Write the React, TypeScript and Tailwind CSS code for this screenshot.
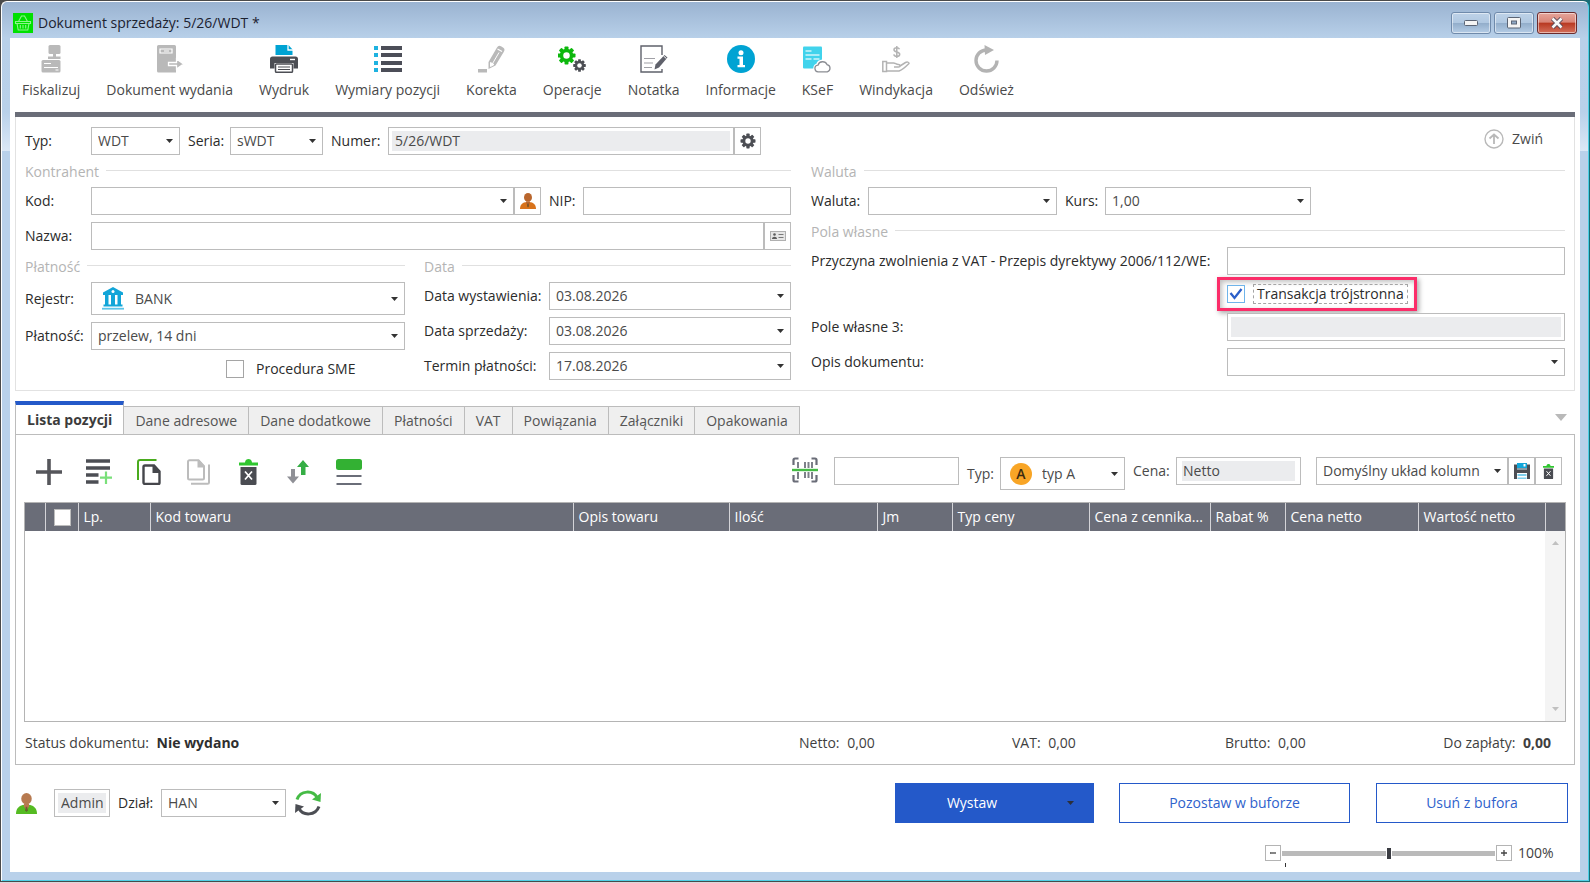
import React, { useState } from "react";
import clsx from "clsx";

/* ---------- icons ---------- */

function Gear({ cx, cy, r, color, hole = "#fff" }: { cx: number; cy: number; r: number; color: string; hole?: string }) {
  const tooth = r * 0.44;
  return (
    <g fill={color}>
      {[0, 45, 90, 135].map((a) => (
        <rect
          key={a}
          x={cx - tooth / 2}
          y={cy - r}
          width={tooth}
          height={r * 2}
          rx={tooth * 0.2}
          transform={`rotate(${a} ${cx} ${cy})`}
        />
      ))}
      <circle cx={cx} cy={cy} r={r * 0.75} />
      <circle cx={cx} cy={cy} r={r * 0.36} fill={hole} />
    </g>
  );
}

const BasketIcon = () => (
  <svg width="20" height="20" viewBox="0 0 20 20" className="shrink-0">
    <rect width="20" height="20" fill="#00e000" />
    <g fill="none" stroke="#8cf58c" strokeWidth="1.1">
      <path d="M5.5 8.5 8.5 3h3l3 5.5" />
      <path d="M2.5 8.5h15v2h-15z" />
      <path d="M4 10.5 5.2 17h9.6l1.2-6.5" />
      <path d="M7.3 12v3.5M10 12v3.5M12.7 12v3.5" />
    </g>
  </svg>
);

const FiscalIcon = () => (
  <svg width="28" height="28" viewBox="0 0 28 28">
    <g fill="#b9b9b9">
      <rect x="11.5" y="0" width="12" height="9" rx="1.5" />
      <rect x="16" y="8" width="3" height="6" />
      <rect x="11" y="11.5" width="12.5" height="2.5" />
      <rect x="4.5" y="15" width="19" height="12.5" rx="1.5" />
    </g>
    <path d="M7 18.5h7M7 22.5h14" stroke="#fff" strokeWidth="1.2" />
    <path d="M18.5 25h3" stroke="#fff" strokeWidth="1" />
  </svg>
);

const ReleaseIcon = () => (
  <svg width="28" height="28" viewBox="0 0 28 28">
    <path d="M2.5 0h16A1.5 1.5 0 0 1 20 1.500V27.500H2.500A1.500 1.500 0 0 1 1 26V1.500A1.500 1.500 0 0 1 2.500 0z" fill="#b9b9b9" />
    <path d="M4 4h12v4H4z" fill="none" stroke="#fff" strokeWidth="1.2" />
    <path d="M8 6h5" stroke="#fff" strokeWidth="1" />
    <path d="M12.5 17.500h8v-3.500l7 5-7 5v-3.500h-8z" fill="#b9b9b9" stroke="#fff" strokeWidth="1.3" />
  </svg>
);

const PrinterIcon = () => (
  <svg width="28" height="28" viewBox="0 0 28 28">
    <path d="M5.5 0h13l4 4.5V10h-17z" fill="#00a3d3" />
    <path d="M18 0v5h5" fill="none" stroke="#fff" strokeWidth="1.3" />
    <path d="M2.5 11.5h23A2.5 2.5 0 0 1 28 14v9.500h-4.500V18h-19v5.500H0V14a2.500 2.500 0 0 1 2.500-2.500z" fill="#4c4e54" />
    <path d="M20 14.500h5" stroke="#fff" strokeWidth="1.4" />
    <rect x="5.500" y="19" width="17" height="8.300" rx="1" fill="#fff" stroke="#4c4e54" strokeWidth="1.5" />
    <path d="M8 22h12M8 24.500h12" stroke="#4c4e54" strokeWidth="1.2" />
  </svg>
);

const DimensionsIcon = () => (
  <svg width="28" height="28" viewBox="0 0 28 28">
    {[3, 10, 18, 25].map((y) => (
      <g key={y}>
        <rect x="0" y={y - 2} width="4" height="4" fill="#1eb2e0" />
        <rect x="7" y={y - 2} width="21" height="4" fill="#4c4e58" />
      </g>
    ))}
  </svg>
);

const CorrectionIcon = () => (
  <svg width="28" height="28" viewBox="0 0 28 28">
    <path d="M11.5 17 20 2.5a3 3 0 0 1 4-1.2l2 1.200a3 3 0 0 1 1 4L18.500 20.500l-7 3.500z" fill="#b9b9b9" />
    <path d="m20.5 4 4.5 2.5" stroke="#fff" strokeWidth="1.3" />
    <path d="m22 7.5-7 12M13.5 17.5l3.5 2-3.500 2z" stroke="#fff" strokeWidth="1" fill="#fff" />
    <rect x="1" y="24" width="9" height="3.5" fill="#b9b9b9" />
  </svg>
);

const OperationsIcon = () => (
  <svg width="28" height="28" viewBox="0 0 28 28">
    <Gear cx={8.5} cy={10.5} r={9} color="#0db80d" />
    <Gear cx={21.5} cy={20.5} r={6.3} color="#4c4e54" />
  </svg>
);

const NoteIcon = () => (
  <svg width="28" height="28" viewBox="0 0 28 28">
    <path d="M22 10V1H1v26h21v-3" fill="none" stroke="#5f616b" strokeWidth="1.4" />
    <path d="M4 13.5h11M4 18h9M4 22.5h8" stroke="#a0a0a6" strokeWidth="1.2" />
    <path d="m15.5 19.5 9-9.5 3 2.5-8.500 10-4.500 2z" fill="#5f616b" />
    <path d="m23.5 11 3 2.7" stroke="#fff" strokeWidth="1" />
  </svg>
);

const InfoIcon = () => (
  <svg width="28" height="28" viewBox="0 0 28 28">
    <circle cx="14" cy="14" r="14" fill="#00a3d3" />
    <circle cx="14" cy="7.8" r="2.5" fill="#fff" />
    <path d="M10.5 11.500H16V20h2v2.300h-7.500V20h2v-6.200h-2z" fill="#fff" />
  </svg>
);

const KsefIcon = () => (
  <svg width="28" height="28" viewBox="0 0 28 28">
    <rect x="0" y="1.5" width="19" height="22" rx="1" fill="#41d3ec" />
    <path d="M2.5 6h6M2.5 10h14M2.5 14h6M10.5 14h6" stroke="#fff" strokeOpacity=".75" strokeWidth="1.3" />
    <path
      d="M15.5 27a3.500 3.500 0 0 1-.5-6.900 5 5 0 0 1 9.300-.6A3.900 3.900 0 0 1 24.500 27z"
      fill="#fff"
      stroke="#fff"
      strokeWidth="4"
    />
    <path
      d="M15.5 26.800a3.300 3.300 0 0 1-.5-6.600 4.800 4.800 0 0 1 9-.6 3.700 3.700 0 0 1 .3 7.200z"
      fill="#fff"
      stroke="#8b8d93"
      strokeWidth="1.3"
    />
  </svg>
);

const CollectionIcon = () => (
  <svg width="28" height="28" viewBox="0 0 28 28" fill="none" stroke="#b3b3b3" strokeWidth="1.5">
    <path d="M17.5 4.200C17 3 16 2.700 14.700 2.700c-1.700 0-2.700.8-2.700 2 0 2.900 5.700 1.500 5.700 4.600 0 1.300-1.200 2.100-2.900 2.100-1.600 0-2.700-.7-3-2M14.800 1v12" />
    <path d="M.8 16.500h3.700v10H.8zM4.500 18h7c2 0 2.500 1.500 5 1.500 2 0 2 2.500 0 2.500H12" />
    <path d="M4.500 26H17c3.500-1 7-4.500 10-7.500 0-1.500-2-1.800-3.500-1L18 21" />
  </svg>
);

const ReloadIcon = () => (
  <svg width="28" height="28" viewBox="0 0 28 28">
    <path d="M14.500 5A10.500 10.500 0 1 0 25 15.500" fill="none" stroke="#b3b3b3" strokeWidth="3.4" />
    <path d="M12.500 0 22 5l-9 5z" fill="#b3b3b3" />
  </svg>
);

const UserIcon = ({ size, body, head }: { size: number; body: string; head: string }) => (
  <svg width={size} height={size} viewBox="0 0 20 20" className="shrink-0">
    <path d="M0 20c0-5 2.500-7.500 6.500-8.500h7C17.500 12.500 20 15 20 20z" fill={body} />
    <path d="M7.500 10.500h5v2L10 17l-2.500-4.500z" fill={head} />
    <ellipse cx="10" cy="5.500" rx="5" ry="5.500" fill={head} />
    <path d="M9.300 13h1.400l.6 3.500L10 18l-1.300-1.500z" fill="#5d4a2a" fillOpacity=".7" />
  </svg>
);

const CardIcon = () => (
  <svg width="16" height="10" viewBox="0 0 16 10">
    <rect x=".5" y=".5" width="15" height="9" fill="#e6e6e6" stroke="#b0b0b0" />
    <circle cx="4.5" cy="3.5" r="1.3" fill="#5c5c5c" />
    <path d="M2 8c0-3 5-3 5 0z" fill="#5c5c5c" />
    <path d="M8.500 3.500h5M8.500 6.500h5" stroke="#7a7a7a" />
  </svg>
);

const BankIcon = () => (
  <svg width="22" height="23" viewBox="0 0 22 23" className="shrink-0" fill="#12a5d8">
    <path d="M11 0 21 5.500V8H1V5.500z" />
    <circle cx="11" cy="4.5" r="1.5" fill="#fff" />
    <path d="M3 8h3.500v10H3zM9 8h4v10H9zM15.500 8H19v10h-3.500z" />
    <rect x="1.5" y="17.500" width="19" height="2" />
    <rect x="0" y="20.800" width="22" height="1.800" fill="#5cc4e8" />
  </svg>
);

const TrashIcon = ({ w, h }: { w: number; h: number }) => (
  <svg width={w} height={h} viewBox="0 0 19 26">
    <path d="M0 3.500h6C6 1 8 0 9.500 0S13 1 13 3.500h6v3H0z" fill="#2fc62f" />
    <path d="M1.500 8h16v16.500A1.500 1.500 0 0 1 16 26H3a1.500 1.500 0 0 1-1.500-1.500z" fill="#4a4c52" />
    <path d="m6 12.500 7 8M13 12.500l-7 8" stroke="#fff" strokeWidth="1.7" />
  </svg>
);

const DiskIcon = () => (
  <svg width="16" height="16" viewBox="0 0 16 16">
    <path d="M0 1.500h16V16H0z" fill="#4c4e54" />
    <path d="M3 0h10v5H3z" fill="#12a5d8" />
    <path d="M9.500 1h2v2.500h-2z" fill="#fff" />
    <path d="M3 10h10v6H3z" fill="#fff" />
    <path d="M3 5.500h10v1H3z" fill="#c9e9f5" />
    <path d="M3.500 11h9v2h-9zM3.500 14.500h9V16h-9z" fill="#7fd0ee" />
  </svg>
);

const PlusIcon = () => (
  <svg width="26" height="26" viewBox="0 0 26 26">
    <path d="M13 0v26M0 13h26" stroke="#55565b" strokeWidth="3.6" />
  </svg>
);

const AddLineIcon = () => (
  <svg width="26" height="26" viewBox="0 0 26 26">
    <path d="M0 2h24M0 9h24M0 16h12.500M0 23h12.500" stroke="#4c4e54" strokeWidth="3.3" />
    <path d="M20 12.500V25M14 18.700h12" stroke="#7ae07a" strokeWidth="2.2" />
  </svg>
);

const CopyIcon = () => (
  <svg width="24" height="26" viewBox="0 0 24 26" fill="none">
    <path d="M1 21V3q0-2 2-2h16.500" stroke="#4aab1e" strokeWidth="2" />
    <path d="M8 6.500h9l5.500 6V24a1 1 0 0 1-1 1H8a1.500 1.500 0 0 1-1.500-1.500V8A1.500 1.500 0 0 1 8 6.500z" stroke="#45464b" strokeWidth="2.4" />
    <path d="M15.500 6h1.800l5.700 6.200V14h-7.500z" fill="#45464b" />
  </svg>
);

const PasteIcon = () => (
  <svg width="24" height="26" viewBox="0 0 24 26" fill="none" stroke="#bcbcbc">
    <path d="M2.500 1.200h9l5.500 6V19a1.500 1.500 0 0 1-1.500 1.500H2.500A1.500 1.500 0 0 1 1 19V2.700a1.500 1.500 0 0 1 1.500-1.500z" strokeWidth="2" />
    <path d="M10.500 1h1.800L17.500 7v1.500h-7z" fill="#bcbcbc" stroke="none" />
    <path d="M22 5.500v18q0 1.300-1.300 1.300H4" strokeWidth="2" />
  </svg>
);

const SortIcon = () => (
  <svg width="22" height="24" viewBox="0 0 22 24">
    <path d="M4 9h4v7.500h4L6 23.500 0 16.500h4z" fill="#8f9096" />
    <path d="M14 15h4.500V7H22l-6-7-6 7h4z" fill="#35ae45" />
  </svg>
);

const LayoutIcon = () => (
  <svg width="26" height="26" viewBox="0 0 26 26">
    <rect x="0" y="0" width="26" height="11" rx="2.5" fill="#33b133" />
    <path d="M.5 17h25M.5 25h25" stroke="#6a6d78" strokeWidth="1.8" />
  </svg>
);

const ScanIcon = () => (
  <svg width="26" height="26" viewBox="0 0 26 26" fill="none">
    <g stroke="#6a6d78" strokeWidth="2.2">
      <path d="M1.500 8V3q0-1.500 1.500-1.500h3.500M19.500 1.500H23q1.500 0 1.500 1.500v5M1.500 18v5q0 1.500 1.500 1.500h3.500M19.500 24.500H23q1.500 0 1.500-1.500v-5" />
    </g>
    <path d="M6 5v6M13 5v6M16.500 5v6M20 5v6M6 15v7M13 15v6M16.500 15v6M20 15v7" stroke="#7d8089" strokeWidth="2" />
    <path d="M0 13h26" stroke="#45bb45" strokeWidth="2.4" />
  </svg>
);

const SyncIcon = () => (
  <svg width="26" height="26" viewBox="0 0 26 26" fill="none">
    <path d="M2 9.500C5.500 0 18 0 22 7.500" stroke="#45bb45" strokeWidth="3" />
    <path d="m26 3-.5 9L17 9.500z" fill="#45bb45" />
    <path d="M24 16.500C20.500 26 8 26 4 18.500" stroke="#4c4e54" strokeWidth="3" />
    <path d="m0 23 .5-9L9 16.500z" fill="#4c4e54" />
  </svg>
);

const Caret = ({ className }: { className?: string }) => (
  <svg width="7" height="4" viewBox="0 0 7 4" className={clsx("pointer-events-none shrink-0", className)}>
    <path d="M0 0h7L3.500 4z" fill="currentColor" />
  </svg>
);

/* ---------- form controls ---------- */

type ComboProps = {
  id: string;
  value?: string;
  className?: string;
  height?: string;
  icon?: React.ReactNode;
};

function Combo({ id, value = "", className, height = "h-7", icon }: ComboProps) {
  return (
    <div className={clsx("flex min-w-0 items-center border border-[#bcbcbc] bg-white", height, className)}>
      {icon}
      <select
        id={id}
        defaultValue={value}
        className="-mr-4 h-full min-w-0 flex-1 appearance-none bg-transparent pr-4 pl-[6px] text-[#4a4a4a] outline-none"
      >
        <option value={value}>{value}</option>
      </select>
      <Caret className="mr-[6px] text-[#333]" />
    </div>
  );
}

function TextBox({ id, className }: { id: string; className?: string }) {
  return <input id={id} type="text" className={clsx("h-7 min-w-0 border border-[#bcbcbc] bg-white px-[6px] outline-none", className)} />;
}

function ReadOnlyBox({ id, value, className, pad = "px-[3px]" }: { id: string; value?: string; className?: string; pad?: string }) {
  return (
    <div className={clsx("flex h-7 min-w-0 border border-[#bcbcbc] bg-white p-[3px]", className)}>
      <input id={id} type="text" readOnly defaultValue={value} className={clsx("min-w-0 flex-1 bg-[#ebecee] text-[#4a4a4a] outline-none", pad)} />
    </div>
  );
}

function SideButton({ label, children }: { label: string; children: React.ReactNode }) {
  return (
    <button aria-label={label} className="flex h-7 w-[27px] shrink-0 items-center justify-center border border-[#bcbcbc] bg-white">
      {children}
    </button>
  );
}

function Section({ title }: { title: string }) {
  return (
    <div className="mb-[5px] flex h-5 items-center gap-[7px] text-[#b4b4b4]">
      <h2>{title}</h2>
      <div className="mb-1 h-px flex-1 bg-[#e0e0e0]" />
    </div>
  );
}

function Check({ id, checked = false }: { id: string; checked?: boolean }) {
  const [on, setOn] = useState(checked);
  return (
    <span className="grid size-[18px] shrink-0">
      <input
        id={id}
        type="checkbox"
        checked={on}
        onChange={(e) => setOn(e.target.checked)}
        className="size-[18px] appearance-none border border-[#a5a5a5] bg-white [grid-area:1/1] checked:border-[#6fb4ea]"
      />
      {on && (
        <svg width="18" height="18" viewBox="0 0 18 18" className="pointer-events-none [grid-area:1/1]">
          <path d="m3.500 8 4 5L14.500 4" fill="none" stroke="#2b5fc9" strokeWidth="2.3" />
        </svg>
      )}
    </span>
  );
}

/* ---------- sections ---------- */

const actions = [
  { label: "Fiskalizuj", icon: <FiscalIcon /> },
  { label: "Dokument wydania", icon: <ReleaseIcon /> },
  { label: "Wydruk", icon: <PrinterIcon /> },
  { label: "Wymiary pozycji", icon: <DimensionsIcon /> },
  { label: "Korekta", icon: <CorrectionIcon /> },
  { label: "Operacje", icon: <OperationsIcon /> },
  { label: "Notatka", icon: <NoteIcon /> },
  { label: "Informacje", icon: <InfoIcon /> },
  { label: "KSeF", icon: <KsefIcon /> },
  { label: "Windykacja", icon: <CollectionIcon /> },
  { label: "Odśwież", icon: <ReloadIcon /> },
];

const tabs = ["Lista pozycji", "Dane adresowe", "Dane dodatkowe", "Płatności", "VAT", "Powiązania", "Załączniki", "Opakowania"];

const columns = [
  { name: "", width: "w-[20px]" },
  { name: "check", width: "w-[33px]" },
  { name: "Lp.", width: "w-[72px]" },
  { name: "Kod towaru", width: "" },
  { name: "Opis towaru", width: "w-[156px]" },
  { name: "Ilość", width: "w-[148px]" },
  { name: "Jm", width: "w-[75px]" },
  { name: "Typ ceny", width: "w-[137px]" },
  { name: "Cena z cennika...", width: "w-[121px]" },
  { name: "Rabat %", width: "w-[75px]" },
  { name: "Cena netto", width: "w-[133px]" },
  { name: "Wartość netto", width: "w-[127px]" },
  { name: "", width: "w-[20px]" },
];

function TitleBar() {
  const button = "flex h-[22px] items-center justify-center rounded-[3px] border shadow-[inset_0_0_0_1px_rgba(255,255,255,0.5)]";
  const glass = "w-10 border-[#6f8aab] bg-[linear-gradient(to_bottom,#bed2e8_0%,#b0c8e1_48%,#93aecb_52%,#b5cde6_100%)]";
  return (
    <header className="flex h-9 items-center gap-[5px] pt-[6px] pr-[3px] pl-[3px]">
      <BasketIcon />
      <h1 className="flex-1 text-[#1c2230]">Dokument sprzedaży: 5/26/WDT *</h1>
      <div className="flex gap-[3px]">
        <button aria-label="Minimalizuj" className={clsx(button, glass)}>
          <svg width="14" height="7" viewBox="0 0 14 7">
            <rect x=".5" y=".5" width="13" height="5" rx="1" fill="#f4f4f4" stroke="#5b6474" />
          </svg>
        </button>
        <button aria-label="Maksymalizuj" className={clsx(button, glass)}>
          <svg width="14" height="12" viewBox="0 0 14 12">
            <rect x=".5" y=".5" width="13" height="10.5" rx="1" fill="#f4f4f4" stroke="#5b6474" />
            <rect x="4.5" y="4" width="5" height="3" fill="#8fa9c6" stroke="#5b6474" />
          </svg>
        </button>
        <button
          aria-label="Zamknij"
          className={clsx(button, "w-10 border-[#6b2a2c] bg-[linear-gradient(to_bottom,#e6a59b_0%,#d98578_45%,#b93a23_52%,#d4705c_100%)]")}
        >
          <svg width="14" height="12" viewBox="0 0 14 12">
            <path d="m2.500 1.500 9 9M11.500 1.500l-9 9" stroke="#5b4a58" strokeWidth="4.5" />
            <path d="m2.500 1.500 9 9M11.500 1.500l-9 9" stroke="#f7f7f7" strokeWidth="2.6" />
          </svg>
        </button>
      </div>
    </header>
  );
}

function DocumentForm() {
  return (
    <section className="grid grid-cols-[766fr_754fr] gap-x-5 border-x border-b border-[#e2e2e2] px-[9px] pt-[10px] pb-[10px]">
      <div className="min-w-0">
        <div className="mb-[7px] flex items-center pr-[30px]">
          <label htmlFor="typ" className="w-[66px] shrink-0">Typ:</label>
          <Combo id="typ" value="WDT" className="w-[89px]" />
          <label htmlFor="seria" className="ml-2 w-[42px] shrink-0">Seria:</label>
          <Combo id="seria" value="sWDT" className="w-[93px]" />
          <label htmlFor="numer" className="ml-2 w-[57px] shrink-0">Numer:</label>
          <ReadOnlyBox id="numer" value="5/26/WDT" className="flex-1" />
          <SideButton label="Ustawienia numeru">
            <svg width="16" height="16" viewBox="0 0 16 16">
              <Gear cx={8} cy={8} r={7.5} color="#4c4e54" />
            </svg>
          </SideButton>
        </div>

        <Section title="Kontrahent" />
        <div className="mb-[7px] flex items-center">
          <label htmlFor="kod" className="w-[66px] shrink-0">Kod:</label>
          <Combo id="kod" className="flex-1" />
          <SideButton label="Kontrahent">
            <UserIcon size={16} body="#d8731c" head="#b9662d" />
          </SideButton>
          <label htmlFor="nip" className="ml-2 w-[34px] shrink-0">NIP:</label>
          <TextBox id="nip" className="w-[208px]" />
        </div>
        <div className="mb-[7px] flex items-center">
          <label htmlFor="nazwa" className="w-[66px] shrink-0">Nazwa:</label>
          <TextBox id="nazwa" className="flex-1" />
          <SideButton label="Karta kontrahenta">
            <CardIcon />
          </SideButton>
        </div>

        <div className="grid grid-cols-[380fr_367fr] gap-x-[19px]">
          <div className="min-w-0">
            <Section title="Płatność" />
            <div className="mb-[7px] flex items-center">
              <label htmlFor="rejestr" className="w-[66px] shrink-0">Rejestr:</label>
              <Combo id="rejestr" value="BANK" height="h-[33px]" className="flex-1 pl-[10px]" icon={<span className="pr-[5px]"><BankIcon /></span>} />
            </div>
            <div className="mb-[9px] flex items-center">
              <label htmlFor="platnosc" className="w-[66px] shrink-0">Płatność:</label>
              <Combo id="platnosc" value="przelew, 14 dni" className="flex-1" />
            </div>
            <div className="flex items-center gap-3 pl-[201px]">
              <Check id="sme" />
              <label htmlFor="sme">Procedura SME</label>
            </div>
          </div>
          <div className="min-w-0">
            <Section title="Data" />
            {[
              { id: "wystawienie", label: "Data wystawienia:", value: "03.08.2026" },
              { id: "sprzedaz", label: "Data sprzedaży:", value: "03.08.2026" },
              { id: "termin", label: "Termin płatności:", value: "17.08.2026" },
            ].map((d) => (
              <div key={d.id} className="mb-[7px] flex items-center last:mb-0">
                <label htmlFor={d.id} className="w-[125px] shrink-0">{d.label}</label>
                <Combo id={d.id} value={d.value} className="flex-1" />
              </div>
            ))}
          </div>
        </div>
      </div>

      <div className="min-w-0">
        <div className="mb-[7px] flex h-7 items-start justify-end pt-[2px] pr-[22px]">
          <button className="flex items-center gap-2 text-[#4a4a4a]">
            <svg width="20" height="20" viewBox="0 0 20 20" fill="none" stroke="#b9b9b9">
              <circle cx="10" cy="10" r="9" strokeWidth="1.4" />
              <path d="M10 15V6M5.500 9.500 10 5.500l4.500 4" strokeWidth="1.8" />
            </svg>
            Zwiń
          </button>
        </div>

        <Section title="Waluta" />
        <div className="mb-[7px] flex items-center">
          <label htmlFor="waluta" className="w-[57px] shrink-0">Waluta:</label>
          <Combo id="waluta" className="w-[189px]" />
          <label htmlFor="kurs" className="ml-2 w-10 shrink-0">Kurs:</label>
          <Combo id="kurs" value="1,00" className="w-[206px]" />
        </div>

        <Section title="Pola własne" />
        <div className="mb-[7px] flex items-center">
          <label htmlFor="przyczyna" className="w-[416px] shrink-0">
            Przyczyna zwolnienia z VAT - Przepis dyrektywy 2006/112/WE:
          </label>
          <TextBox id="przyczyna" className="flex-1" />
        </div>
        <div className="mb-[7px] flex h-6 items-center pl-[406px]">
          <div className="-my-2 flex h-[34px] w-[200px] shrink-0 items-center gap-2 border-[3px] border-[#fb2d69] pl-[7px] shadow-[2px_2px_5px_rgba(0,0,0,0.35),inset_2px_2px_5px_rgba(0,0,0,0.25)]">
            <Check id="trojstronna" checked />
            <label htmlFor="trojstronna" className="border border-dashed border-[#a5a5a5] px-[3px] leading-[18px] whitespace-nowrap">
              Transakcja trójstronna
            </label>
          </div>
        </div>
        <div className="mb-[7px] flex items-center">
          <label htmlFor="pole3" className="w-[416px] shrink-0">Pole własne 3:</label>
          <ReadOnlyBox id="pole3" className="flex-1" />
        </div>
        <div className="flex items-center">
          <label htmlFor="opis" className="w-[416px] shrink-0">Opis dokumentu:</label>
          <Combo id="opis" className="flex-1" />
        </div>
      </div>
    </section>
  );
}

function Tabs() {
  const [active, setActive] = useState(0);
  return (
    <nav className="mt-[10px] flex items-end">
      {tabs.map((tab, i) => (
        <button
          key={tab}
          onClick={() => setActive(i)}
          className={clsx(
            "border-r border-[#bcbcbc] px-[11px] whitespace-nowrap",
            i === active
              ? "-mb-px h-[34px] border-t-4 border-l border-t-[#2459c9] bg-white font-bold text-[#3c3c3c]"
              : "h-7 border-t bg-[#efefef] text-[#555]"
          )}
        >
          {tab}
        </button>
      ))}
      <svg width="12" height="7" viewBox="0 0 12 7" className="mr-2 mb-[13px] ml-auto">
        <path d="M0 0h12L6 7z" fill="#b9b9b9" />
      </svg>
    </nav>
  );
}

function ItemsToolbar() {
  return (
    <div className="flex items-start pr-1 pl-3">
      <div className="flex items-center pt-[2px]">
        <button aria-label="Dodaj" className="w-[50px]"><PlusIcon /></button>
        <button aria-label="Dodaj wiele" className="w-[51px]"><AddLineIcon /></button>
        <button aria-label="Kopiuj" className="w-[50px]"><CopyIcon /></button>
        <button aria-label="Wklej" className="w-[52px]"><PasteIcon /></button>
        <button aria-label="Usuń" className="w-12"><TrashIcon w={19} h={26} /></button>
        <button aria-label="Sortuj" className="w-[49px]"><SortIcon /></button>
        <button aria-label="Widok"><LayoutIcon /></button>
      </div>
      <div className="ml-auto flex h-[33px] items-start">
        <button aria-label="Skanuj kod" className="mr-4"><ScanIcon /></button>
        <TextBox id="kod-kreskowy" className="w-[125px]" />
        <label htmlFor="typ-ceny" className="ml-2 w-[33px] self-center text-[#4a4a4a]">Typ:</label>
        <Combo
          id="typ-ceny"
          value="typ A"
          height="h-[33px]"
          className="w-[125px] pl-[9px]"
          icon={<span className="mr-1 flex size-[22px] shrink-0 items-center justify-center rounded-full bg-[#f8a526] font-semibold text-[#3a2a10]">A</span>}
        />
        <label htmlFor="cena" className="ml-2 flex h-7 w-[43px] items-center text-[#4a4a4a]">Cena:</label>
        <ReadOnlyBox id="cena" value="Netto" className="mr-[15px] w-[125px] pr-[5px] pl-[5px]" pad="px-px" />
        <Combo id="uklad" value="Domyślny układ kolumn" className="w-[192px]" />
        <SideButton label="Zapisz układ"><DiskIcon /></SideButton>
        <SideButton label="Usuń układ"><TrashIcon w={11} h={15} /></SideButton>
      </div>
    </div>
  );
}

function ItemsTable() {
  return (
    <div className="mt-3 flex flex-1 flex-col border border-[#b4b4b4]">
      <table className="w-full table-fixed border-collapse">
        <thead>
          <tr className="h-7 bg-[#6a6d78] text-left text-white">
            {columns.map((c, i) => (
              <th key={i} className={clsx("overflow-hidden border-r border-[#d4d4d8] pl-[5px] font-normal whitespace-nowrap last:border-r-0", c.width)}>
                {c.name === "check" ? (
                  <input type="checkbox" aria-label="Zaznacz wszystkie" className="ml-[3px] block size-[17px] appearance-none border border-[#bdbdbd] bg-white" />
                ) : (
                  c.name
                )}
              </th>
            ))}
          </tr>
        </thead>
      </table>
      <div className="flex min-h-[150px] flex-1 justify-end">
        <div className="flex w-5 flex-col items-center justify-between bg-[#f4f4f4] py-[10px] text-[#c0c0c0]">
          <Caret className="rotate-180" />
          <Caret />
        </div>
      </div>
    </div>
  );
}

function Summary() {
  return (
    <div className="flex h-[42px] items-center pr-[15px] pl-px text-[#3f3f3f]">
      <p className="flex-1">
        Status dokumentu: <b className="ml-1 text-[#2f2f2f]">Nie wydano</b>
      </p>
      <p className="w-[213px]">Netto: <span className="ml-1">0,00</span></p>
      <p className="w-[213px]">VAT: <span className="ml-1">0,00</span></p>
      <p className="w-[213px]">Brutto: <span className="ml-1">0,00</span></p>
      <p className="w-[113px] text-right whitespace-nowrap">Do zapłaty: <b className="ml-1">0,00</b></p>
    </div>
  );
}

function Footer() {
  const outlined = "h-10 border border-[#2459c9] bg-white text-[#2f62cc]";
  return (
    <footer className="mt-[18px] pr-[7px] pb-[5px]">
      <div className="flex items-center">
        <span className="mr-[17px] ml-px"><UserIcon size={21} body="#55bb22" head="#b77a50" /></span>
        <ReadOnlyBox id="operator" value="Admin" className="w-14 shrink-0" />
        <label htmlFor="dzial" className="ml-2 w-[43px] shrink-0">Dział:</label>
        <Combo id="dzial" value="HAN" className="w-[125px]" />
        <button aria-label="Synchronizuj" className="ml-[9px]"><SyncIcon /></button>
        <button className="ml-auto flex h-10 w-[199px] items-center bg-[#2459c9] pr-5 text-white">
          <span className="flex-1 pr-[18px]">Wystaw</span>
          <Caret className="text-[#2b2f3a]" />
        </button>
        <button className={clsx(outlined, "ml-[25px] w-[231px]")}>Pozostaw w buforze</button>
        <button className={clsx(outlined, "ml-[26px] w-[192px]")}>Usuń z bufora</button>
      </div>
      <div className="mt-[22px] flex items-start justify-end pr-3">
        <button aria-label="Pomniejsz" className="flex size-4 items-center justify-center border border-[#b4b4b4]">
          <svg width="8" height="8" viewBox="0 0 8 8"><path d="M1 4h6" stroke="#444" strokeWidth="1.3" /></svg>
        </button>
        <div className="mx-px w-[213px]">
          <input
            type="range"
            aria-label="Powiększenie"
            min={0}
            max={200}
            defaultValue={100}
            className="block h-4 w-full appearance-none bg-[linear-gradient(#bababa,#bababa)] bg-[length:100%_5px] bg-center bg-no-repeat [&::-webkit-slider-thumb]:h-[11px] [&::-webkit-slider-thumb]:w-[6px] [&::-webkit-slider-thumb]:appearance-none [&::-webkit-slider-thumb]:border-x [&::-webkit-slider-thumb]:border-white [&::-webkit-slider-thumb]:bg-[#3a3c42]"
          />
          <div className="mt-[2px] ml-[3px] h-1 w-px bg-[#333]" />
        </div>
        <button aria-label="Powiększ" className="flex size-4 items-center justify-center border border-[#b4b4b4]">
          <svg width="8" height="8" viewBox="0 0 8 8"><path d="M1 4h6M4 1v6" stroke="#444" strokeWidth="1.3" /></svg>
        </button>
        <span className="ml-[6px] w-[38px] leading-4 text-[#3f3f3f]">100%</span>
      </div>
    </footer>
  );
}

export default function App() {
  return (
    <div className="flex min-h-screen flex-col border-b border-[#d8dadd] bg-[linear-gradient(to_right,#4a4a4a_0%,#4a4a4a_98%,#176e78_100%)] pt-px pr-px pb-px pl-px font-['Open_Sans','Noto_Sans',sans-serif] text-[14px] leading-5 text-[#2b2b2b]">
      <div className="flex flex-1 flex-col rounded-t-md border-t border-r border-b border-l border-t-white border-r-[#4fd0e6] border-b-[#4fd0e6] border-l-white bg-[linear-gradient(to_bottom,#9ab3d1_0px,#b8d0e9_36px,#b9d1ea_110px,#dbe8f6_149px,#b9d1ea_149px)] px-2 pb-2">
        <TitleBar />
        <main className="flex flex-1 flex-col bg-white px-[5px]">
          <nav className="flex h-[74px] gap-[26px] pt-[7px] pl-[7px]">
            {actions.map((a) => (
              <button key={a.label} className="flex flex-col items-center gap-[7px] whitespace-nowrap text-[#4a4a4a]">
                {a.icon}
                {a.label}
              </button>
            ))}
          </nav>
          <div className="h-[5px] shrink-0 bg-[#6a6d78]" />
          <DocumentForm />
          <Tabs />
          <section className="flex flex-1 flex-col border border-[#bcbcbc] px-2 pt-[22px]">
            <ItemsToolbar />
            <ItemsTable />
            <Summary />
          </section>
          <Footer />
        </main>
      </div>
    </div>
  );
}
